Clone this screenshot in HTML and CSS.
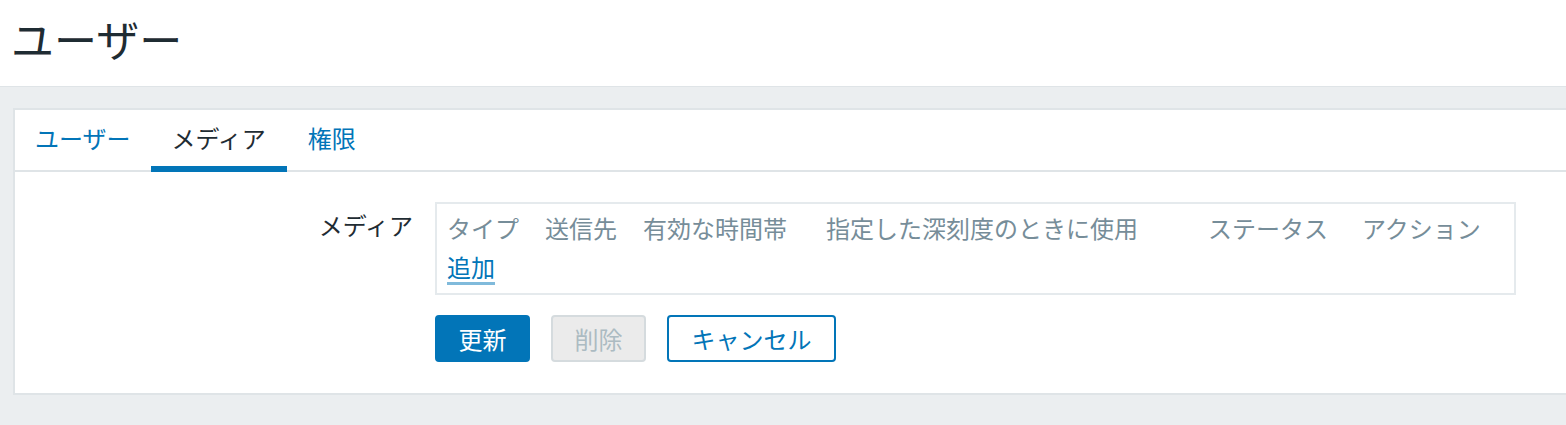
FILE: index.html
```html
<!DOCTYPE html>
<html lang="ja">
<head>
<meta charset="utf-8">
<title>ユーザー</title>
<link rel="stylesheet" href="styles.css">
</head>
<body>
<header class="page-header">
  <h1 class="page-title">ユーザー</h1>
</header>
<main class="content">
  <section class="card">
    <nav class="tabs">
      <a class="tab" href="#">ユーザー</a>
      <a class="tab tab-active" href="#">メディア</a>
      <a class="tab" href="#">権限</a>
    </nav>
    <div class="form">
      <div class="form-label">メディア</div>
      <div class="media-box">
        <div class="media-head">
          <span class="col">タイプ</span>
          <span class="col">送信先</span>
          <span class="col">有効な時間帯</span>
          <span class="col">指定した深刻度のときに使用</span>
          <span class="col">ステータス</span>
          <span class="col">アクション</span>
        </div>
        <div class="media-add">
          <a class="link-action" href="#">追加</a>
        </div>
      </div>
      <div class="form-label"></div>
      <div class="buttons">
        <button class="btn btn-primary">更新</button>
        <button class="btn btn-disabled" disabled>削除</button>
        <button class="btn btn-alt">キャンセル</button>
      </div>
    </div>
  </section>
</main>
</body>
</html>
```

FILE: styles.css
```css
* { box-sizing: border-box; }

html, body {
  margin: 0;
  padding: 0;
  background: #ebeef0;
  font-family: "Noto Sans CJK JP", "Noto Sans", sans-serif;
  color: #1f2c33;
}

.page-header {
  height: 87px;
  background: #ffffff;
  border-bottom: 1px solid #dfe4e7;
  padding: 17px 0 0 11px;
}

.page-title {
  margin: 0;
  font-size: 43px;
  line-height: 43px;
  font-weight: 400;
  color: #1f2c33;
}

.content {
  padding: 21px 0 30px 13px;
}

.card {
  background: #ffffff;
  border: 2px solid #dfe4e7;
  border-right: 0;
  padding-bottom: 31px;
}

.tabs {
  display: flex;
  border-bottom: 2px solid #dfe4e7;
  height: 62px;
}

.tab {
  display: block;
  height: 62px;
  margin-bottom: -2px;
  padding: 0 21px;
  font-size: 24px;
  line-height: 56px;
  color: #0275b8;
  text-decoration: none;
  border-bottom: 6px solid transparent;
}

.tab:first-child {
  padding: 0 20px;
}

.tab-active {
  color: #1f2c33;
  border-bottom-color: #0275b8;
}

.form {
  display: grid;
  grid-template-columns: 420px 1081px;
  row-gap: 20px;
  padding-top: 30px;
}

.form-label {
  text-align: right;
  padding: 3px 22px 0 0;
  font-size: 24px;
  line-height: 40px;
  color: #1f2c33;
}

.media-box {
  border: 2px solid #e5eaed;
  padding: 4px 10px 8px;
}

.media-head {
  display: grid;
  grid-template-columns: 98px 98px 183px 382px 154px auto;
  font-size: 24px;
  line-height: 40px;
  height: 40px;
  color: #768d99;
  white-space: nowrap;
}

.media-add {
  padding-top: 3px;
}

.link-action {
  display: inline-block;
  font-size: 24px;
  line-height: 31px;
  color: #0275b8;
  text-decoration: none;
  border-bottom: 3px solid #80badb;
}

.buttons {
  display: flex;
  gap: 21px;
}

.btn {
  height: 47px;
  padding: 0 21.5px;
  border: 2px solid #0275b8;
  border-radius: 4px;
  font-family: "Noto Sans CJK JP", "Noto Sans", sans-serif;
  font-size: 24px;
  line-height: 40px;
  background: #ffffff;
  color: #0275b8;
}

.btn-primary {
  background: #0275b8;
  color: #ffffff;
}

.btn-disabled {
  background: #ebebeb;
  border-color: #d5dbde;
  color: #acbbc2;
}

.btn-alt {
  padding: 0 22.5px;
  background: #ffffff;
  color: #0275b8;
}
```
